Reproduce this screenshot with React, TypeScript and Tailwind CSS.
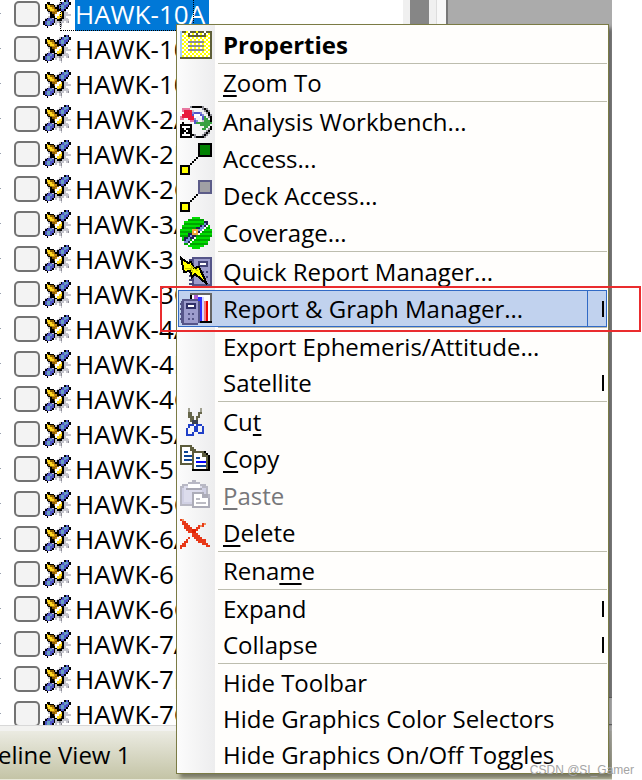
import type { ReactNode } from 'react';

const palette: Record<string, string> = {
  k: '#000000',
  v: '#5055c8',
  t: '#68a0c0',
  y: '#ffd820',
  Y: '#ffff00',
  w: '#ffffff',
  o: '#c88a10',
  g: '#8a5c00',
  s: '#c4c4cc',
  d: '#8c8c94',
  O: '#5f5f38',
  c: '#a8ccf4',
  R: '#e8183c',
  r: '#e878a0',
  b: '#8888d8',
  G: '#38a040',
};

const satellite = [
  '............kvk.',
  '..kk.....skvttvk',
  '.kykkk..skvvtvvk',
  '.kyyggkskvttvvk.',
  '.kgyyogkkvttvk..',
  '..kgyyookkvvk...',
  '..skgooggwkks...',
  '...skggowwykss..',
  '....kkgwwyykssss',
  '...skkkwyygks...',
  '.skvvskkygkkss..',
  '.kvvtvkskkkssss.',
  'kvttvvkssdss.sd.',
  'kvttvk.s.sd.....',
  '.kvvk....sd.....',
  '..k.......s.....',
];

const properties = [
  '................',
  'cOOYwOOOYOOOwOOO',
  'cwYwOwYwOwYwOwYO',
  'cYwYOOOOOOOOOYwO',
  'cwYwYwYwYwYwYwYO',
  'cYwYwYwYwYwYwYwO',
  'cwYwddddddddYwYO',
  'cYwYwYwYwYwYwYwO',
  'cwYwddddddddYwYO',
  'cYwYwYwYwYwYwYwO',
  'cwYwddddddddYwYO',
  'cYwYwYwYwYwYwYwO',
  'cwYwYwYwYwYwYwYO',
  'cYwYwYwYwYwYwYwO',
  'OOOOOOOOOOOOOOOO',
];

const analysis = [
  '.....dkkkkkd....',
  '.rrrr......dkd..',
  '.rRRRRs.....dkd.',
  '..RRRRbvvvb..dk.',
  '.RRRRRvwwwvb..kd',
  'rRRRRRRw..wvG.dk',
  'rr..RRRb...vGG.k',
  '.....rrvb..sGGGk',
  '.k....wvGGGGGGGG',
  'kkkkkk....GGGGG.',
  'kwwwwk......GG.k',
  'kkwkkk.....GG.dk',
  'kkkwkk.......dk.',
  'kkwkkk......dkd.',
  'kwwwwkkd...dkd..',
  'kkkkkk.dkkkkd...',
];

function PixelIcon({ rows, className }: { rows: string[]; className: string }) {
  return (
    <svg viewBox="0 0 16 16" className={className} shapeRendering="crispEdges" aria-hidden="true">
      {rows.flatMap((row, y) =>
        row.split('').map((ch, x) =>
          ch === '.' ? null : <rect key={`${x}-${y}`} x={x} y={y} width={1} height={1} fill={palette[ch]} />
        )
      )}
    </svg>
  );
}

function Icon({ children }: { children: ReactNode }) {
  return (
    <svg viewBox="0 0 32 32" className="size-8" shapeRendering="crispEdges" aria-hidden="true">
      {children}
    </svg>
  );
}

function AccessIcon({ fill, edge }: { fill: string; edge: string }) {
  return (
    <Icon>
      <path d="M10 20h2v2h-2zM12 18h2v2h-2zM14 16h2v2h-2zM16 14h2v2h-2z" fill="#000" />
      <path d="M18 0h14v14H18z" fill={edge} />
      <path d="M20 2h10v10H20z" fill={fill} />
      <path d="M0 22h10v10H0z" fill="#000" />
      <path d="M2 24h6v6H2z" fill="#ff0" />
    </Icon>
  );
}

function CoverageIcon() {
  return (
    <Icon>
      <path d="M12 0h8v2h4v2h4v4h2v4h2v8h-2v4h-2v4h-4v2h-4v2h-8v-2H8v-2H4v-4H2v-4H0v-8h2V8h2V4h4V2h4z" fill="#00dc00" />
      <path d="M8 2h16v2H8zM4 6h24v2H4zM2 10h28v2H2zM0 14h32v2H0zM0 18h32v2H0zM2 22h28v2H2zM4 26h24v2H4z" fill="#00a400" />
      <path d="M24 4h4v4h-4zM20 8h6v4h-6zM16 10h6v6h-6zM8 16h8v6H8zM4 20h6v6H4z" fill="#202050" />
      <path d="M24 6h2v2h-2zM22 8h2v2h-2zM20 10h4v2h-4zM18 12h4v2h-4zM10 18h2v2h-2zM8 20h2v2H8zM6 22h4v2H6zM4 24h4v2H4z" fill="#7890d8" />
      <path d="M26 8h2v2h-2zM24 10h2v2h-2zM22 12h2v2h-2zM20 14h2v2h-2zM18 16h2v2h-2zM14 20h2v2h-2zM12 22h2v2h-2zM10 24h2v2h-2zM8 26h2v2H8z" fill="#fff" />
      <path d="M12 12h6v6h-6z" fill="#f0a838" />
      <path d="M14 14h2v2h-2z" fill="#fff" />
    </Icon>
  );
}

function QuickReportIcon() {
  return (
    <Icon>
      <path d="M12 1h20v29H12z" fill="#555588" />
      <path d="M14 3h16v25H14z" fill="#9c9ccc" />
      <path d="M18 5h10v6H18z" fill="#444478" />
      <path d="M20 7h6v2h-6z" fill="#fff" />
      <path d="M9 3h4v2H9zM9 19h5v2H9zM9 23h5v2H9zM9 27h5v2H9zM22 15h2v2h-2zM26 15h2v2h-2zM26 20h2v2h-2z" fill="#444478" />
      <path d="M1 2l7 5 3-1 3 6 5-1 8 17-12-10-3 3-2-6-6 1z" fill="#ff0" stroke="#000" strokeWidth="2" />
      <path d="M5 13l5-1 3 5-2-7 7 5" fill="none" stroke="#c8c800" strokeWidth="1" />
    </Icon>
  );
}

function ReportGraphIcon() {
  return (
    <Icon>
      <path d="M10 0h22v30H10z" fill="#666" />
      <path d="M12 2h18v26H12z" fill="#fff" />
      <path d="M10 2h2v4h-2zM20 28h12v2H20z" fill="#000" />
      <path d="M14 2h4v6h-4z" fill="#b060d0" />
      <path d="M18 4h4v24h-4z" fill="#3030ff" />
      <path d="M22 4h2v24h-2z" fill="#d8d8ff" />
      <path d="M24 8h4v20h-4z" fill="#f00000" />
      <path d="M24 8h2v20h-2z" fill="#f08080" />
      <path d="M2 6h16v2h2v22h-2v2H2v-2H1V8h1z" fill="#555588" />
      <path d="M4 8h14v22H4z" fill="#9c9ccc" />
      <path d="M6 10h10v6H6z" fill="#303068" />
      <path d="M8 12h6v2H8z" fill="#fff" />
      <path d="M0 10h4v2H0zM0 15h4v2H0zM0 20h4v2H0zM0 25h4v2H0zM8 20h2v2H8zM12 20h2v2h-2zM8 25h2v2H8zM12 25h2v2h-2z" fill="#555588" />
    </Icon>
  );
}

function CutIcon() {
  return (
    <Icon>
      <path d="M8 2h2v4h2v4h2v4h2v-4h2V6h2V2h2v6h-2v4h-2v4h-2v2h-4v-2h-2v-4h-2V8H8z" fill="#66664a" />
      <path d="M8 2h2v4H8zM20 2h2v4h-2z" fill="#a0a090" />
      <path d="M12 14h6v4h-6z" fill="#3a4250" />
      <path d="M8 18h6v2h2v6h-2v4H6v-8h2zM8 22v6h4v-2h2v-6h-4v2zM16 18h6v2h2v8h-6v-2h-2zM18 20v6h4v-6z" fill="#2040c8" fillRule="evenodd" />
    </Icon>
  );
}

function CopyIcon() {
  return (
    <Icon>
      <path d="M0 2h12v2h2v2h2v16H0z" fill="#5c5c3c" />
      <path d="M2 4h8v4h4v12H2z" fill="#fff" />
      <path d="M4 8h4v2H4zM4 12h8v2H4zM4 16h8v2H4z" fill="#0c4494" />
      <path d="M14 8h12v2h2v2h2v16H12v-2z" fill="#000" />
      <path d="M12 8h12v2h2v2h2v14H12z" fill="#5c5c3c" />
      <path d="M14 10h8v4h4v12H14z" fill="#fff" />
      <path d="M16 14h4v2h-4zM16 22h10v2H16z" fill="#0c4494" />
      <path d="M16 18h10v2H16z" fill="#0000ff" />
    </Icon>
  );
}

function PasteIcon() {
  return (
    <Icon>
      <path d="M2 4h6V2h4V0h4v2h4v2h6v2h2v8h2v14H12v-2H0V6h2z" fill="#b8b8c4" />
      <path d="M2 8h24v16H2z" fill="#d0d0e4" />
      <path d="M4 6h18v16H4z" fill="#dcdcec" />
      <path d="M8 4h12v4H8z" fill="#fff" />
      <path d="M6 8h16v2H6z" fill="#a8a8b4" />
      <path d="M12 12h12v2h4v4h2v10H12z" fill="#acacb8" />
      <path d="M14 14h8v4h6v8H14z" fill="#fff" />
      <path d="M16 18h4v2h-4zM16 22h10v2H16z" fill="#bcbcc4" />
    </Icon>
  );
}

function DeleteIcon() {
  return (
    <Icon>
      <path d="M0 2h4v2h2v2h2v2h2v2h2v2h4v-2h2V8h4V6h4v2h-2v2h-4v2h-2v2h-2v2h2v2h2v2h2v2h4v4h2v2h2v2h-4v-2h-4v-2h-4v-2h-2v-2h-2v-2h-4v2h-2v2H8v2H6v4H2v2H0v-4h2v-2h2v-2h2v-2h2v-2h4v-4H8v-2H6v-2H4V8H2V4H0z" fill="#e83818" />
      <path d="M24 6h2v2h-4v2h-2V8h4zM2 2h2v2H2z" fill="#f0905c" />
      <path d="M12 12h4v4h-4z" fill="#e02000" />
    </Icon>
  );
}

type MenuItem = {
  label: string;
  mnemonic?: number;
  icon?: ReactNode;
  bold?: boolean;
  disabled?: boolean;
  active?: boolean;
  submenu?: boolean;
};

const groups: MenuItem[][] = [
  [{ label: 'Properties', bold: true, icon: <PixelIcon rows={properties} className="size-8" /> }],
  [{ label: 'Zoom To', mnemonic: 0 }],
  [
    { label: 'Analysis Workbench...', icon: <PixelIcon rows={analysis} className="size-8" /> },
    { label: 'Access...', icon: <AccessIcon fill="#008000" edge="#000" /> },
    { label: 'Deck Access...', icon: <AccessIcon fill="#a0a0a4" edge="#5c5c88" /> },
    { label: 'Coverage...', icon: <CoverageIcon /> },
  ],
  [
    { label: 'Quick Report Manager...', icon: <QuickReportIcon /> },
    { label: 'Report & Graph Manager...', icon: <ReportGraphIcon />, active: true, submenu: true },
  ],
  [{ label: 'Export Ephemeris/Attitude...' }, { label: 'Satellite', submenu: true }],
  [
    { label: 'Cut', mnemonic: 2, icon: <CutIcon /> },
    { label: 'Copy', mnemonic: 0, icon: <CopyIcon /> },
    { label: 'Paste', mnemonic: 0, icon: <PasteIcon />, disabled: true },
    { label: 'Delete', mnemonic: 0, icon: <DeleteIcon /> },
  ],
  [{ label: 'Rename', mnemonic: 4 }],
  [
    { label: 'Expand', submenu: true },
    { label: 'Collapse', submenu: true },
  ],
  [{ label: 'Hide Toolbar' }, { label: 'Hide Graphics Color Selectors' }, { label: 'Hide Graphics On/Off Toggles' }],
];

const satellites = [10, 2, 3, 4, 5, 6, 7].flatMap((n) => ['A', 'B', 'C'].map((s) => `HAWK-${n}${s}`));

function Label({ text, mnemonic }: { text: string; mnemonic?: number }) {
  if (mnemonic === undefined) return <>{text}</>;
  return (
    <>
      {text.slice(0, mnemonic)}
      <u className="decoration-2 underline-offset-3">{text[mnemonic]}</u>
      {text.slice(mnemonic + 1)}
    </>
  );
}

function MenuRow({ item }: { item: MenuItem }) {
  return (
    <button
      type="button"
      role="menuitem"
      disabled={item.disabled}
      className={`flex w-full items-center border text-left whitespace-nowrap ${item.icon ? 'h-[37px]' : 'h-9'} ${
        item.active ? 'border-[#316ac5] bg-[#c1d2ee]' : 'border-transparent'
      } ${item.bold ? 'font-bold' : ''} ${item.disabled ? 'text-[#77777a]' : 'text-black'}`}
    >
      <span className="flex w-[44px] shrink-0 pl-px">{item.icon}</span>
      <span className="flex-1">
        <Label text={item.label} mnemonic={item.mnemonic} />
      </span>
      {item.submenu && (
        <span className={`flex h-full w-[19px] items-center border-l pl-[14px] ${item.active ? 'border-[#316ac5]' : 'border-transparent'}`}>
          <span className="h-4 w-0.5 bg-black" />
        </span>
      )}
    </button>
  );
}

function TreeRow({ name, selected }: { name: string; selected: boolean }) {
  return (
    <label className="relative flex h-[35px] shrink-0 items-center">
      <span className="h-px w-px bg-gray-400" />
      <input
        type="checkbox"
        className="ml-[13px] size-[26px] shrink-0 appearance-none rounded-[5px] border-2 border-[#737373] bg-[#f3f3f3]"
      />
      <PixelIcon rows={satellite} className="ml-[3px] size-7 shrink-0" />
      <span className={`ml-1 flex h-full items-center text-[26px] ${selected ? 'bg-[#0078d7] pr-1 text-white' : ''}`}>{name}</span>
      {selected && <span className="absolute inset-y-0 left-[60px] w-[134px] border border-dotted border-black" />}
    </label>
  );
}

export default function App() {
  return (
    <main className="relative h-screen overflow-hidden bg-white pr-[30px] font-['Open_Sans','Noto_Sans',sans-serif] text-2xl leading-8 text-black">
      <div className="flex h-full flex-col">
        <div className="flex min-h-0 flex-1">
          <div className="flex w-[403px] flex-col overflow-hidden">
            <div className="-mt-1 flex min-h-0 flex-1 flex-col overflow-hidden">
              {satellites.map((name, i) => (
                <TreeRow key={name} name={name} selected={i === 0} />
              ))}
            </div>
          </div>
          <div className="w-[33px] border-x-[7px] border-[#f0f0f0] bg-[#868686]" />
          <div className="w-[10px] border-l border-[#ddd] bg-[#f8f8f8]" />
          <div className="flex flex-1 flex-col border-l-2 border-[#777]">
            <div className="flex-1 bg-[#ababab]" />
            <div className="h-[28px] border-y border-[#888] bg-[#ececec]" />
          </div>
        </div>
        <div className="h-1.5 border-t border-[#d8d8d8] bg-[#f2f2f0]" />
        <div className="flex h-[49px] items-center border-b border-[#e8e8d8] bg-linear-to-b from-[#ebebe2] to-[#c4c4a6]">
          <button type="button" className="-ml-0.5 whitespace-nowrap">
            eline View 1
          </button>
        </div>
      </div>

      <div
        role="menu"
        className="absolute top-6 left-[176px] w-[433px] border border-[#7b7b45] bg-[#fffefc] bg-linear-to-r from-[#fcfcfc] to-[#ededee] bg-[length:38px_100%] bg-no-repeat px-px pt-px shadow-[4px_4px_4px_rgba(0,0,0,0.4)]"
      >
        {groups.map((items, i) => (
          <div key={i}>
            {i > 0 && <hr className="mb-px ml-10 border-[#bdbdae]" />}
            {items.map((item) => (
              <MenuRow key={item.label} item={item} />
            ))}
          </div>
        ))}
      </div>

      {/* shadow stops at the window edge */}
      <div className="absolute inset-y-0 right-0 w-[30px] bg-white" />

      <div className="pointer-events-none absolute top-[286px] right-px left-[160px] h-[46px] border-2 border-[#ea2c2e]" />
      <span className="absolute right-2 bottom-0.5 font-['Liberation_Sans',sans-serif] text-xs leading-4 text-[#a4a4a4]">
        CSDN @SI_Gamer
      </span>
    </main>
  );
}
